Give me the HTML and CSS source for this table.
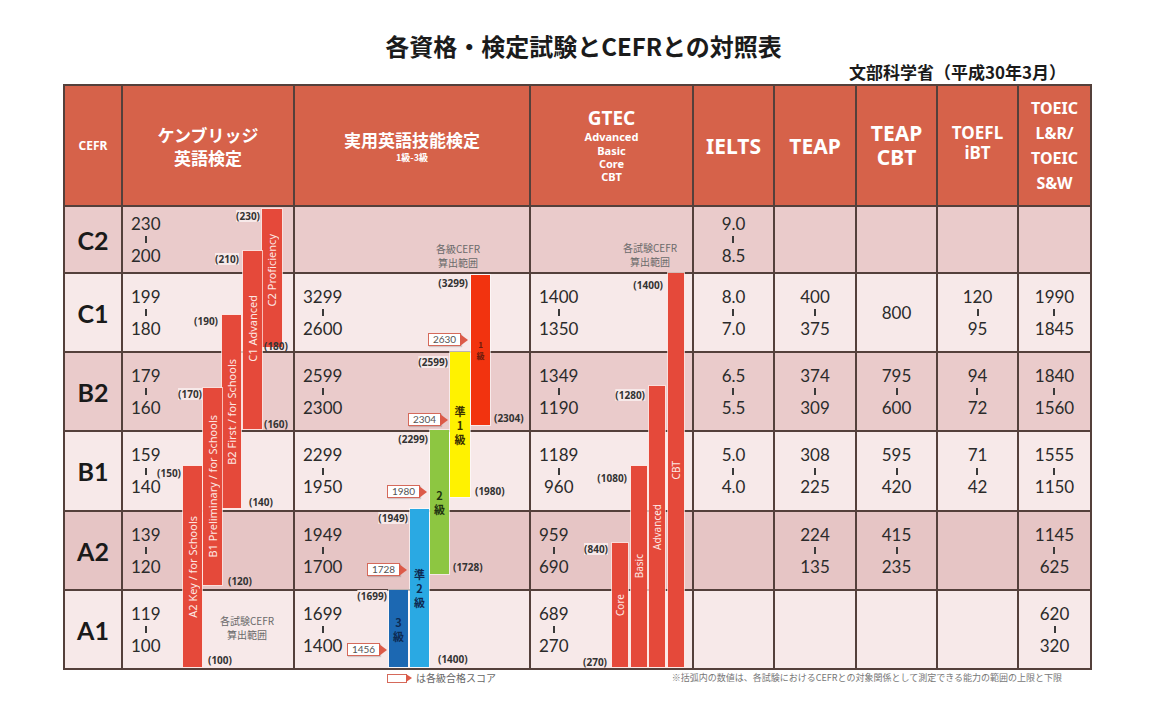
FILE: index.html
```html
<!DOCTYPE html>
<html lang="ja">
<head>
<meta charset="utf-8">
<title>各資格・検定試験とCEFRとの対照表</title>
<link rel="stylesheet" href="styles.css">
</head>
<body>
<div class="page">
  <h1 class="title">各資格・検定試験とCEFRとの対照表</h1>
  <div class="sub">文部科学省（平成30年3月）</div>

  <div class="chart">
    <!-- header -->
    <div class="h"><span class="h-cefr">CEFR</span></div>
    <div class="h"><span class="h-jp">ケンブリッジ<br>英語検定</span></div>
    <div class="h"><span class="h-jp">実用英語技能検定</span><span class="h-sm">1級-3級</span></div>
    <div class="h"><span class="h-gtec">GTEC</span><span class="h-gs">Advanced<br>Basic<br>Core<br>CBT</span></div>
    <div class="h"><span class="h-lg">IELTS</span></div>
    <div class="h"><span class="h-lg">TEAP</span></div>
    <div class="h"><span class="h-lg h-two">TEAP<br>CBT</span></div>
    <div class="h"><span class="h-md">TOEFL<br>iBT</span></div>
    <div class="h"><span class="h-toeic">TOEIC<br>L&amp;R/<br>TOEIC<br>S&amp;W</span></div>

    <!-- C2 -->
    <div class="c cf d">C2</div>
    <div class="c lc d"><span class="v">230<i class="t"></i>200</span></div>
    <div class="c lc d"></div>
    <div class="c lc d"></div>
    <div class="c cc d"><span class="v">9.0<i class="t"></i>8.5</span></div>
    <div class="c cc d"></div>
    <div class="c cc d"></div>
    <div class="c cc d"></div>
    <div class="c cc d"></div>

    <!-- C1 -->
    <div class="c cf l">C1</div>
    <div class="c lc l"><span class="v">199<i class="t"></i>180</span></div>
    <div class="c lc l"><span class="v">3299<i class="t"></i>2600</span></div>
    <div class="c lc l"><span class="v">1400<i class="t"></i>1350</span></div>
    <div class="c cc l"><span class="v">8.0<i class="t"></i>7.0</span></div>
    <div class="c cc l"><span class="v">400<i class="t"></i>375</span></div>
    <div class="c cc l"><span class="v">800</span></div>
    <div class="c cc l"><span class="v">120<i class="t"></i>95</span></div>
    <div class="c cc l"><span class="v">1990<i class="t"></i>1845</span></div>

    <!-- B2 -->
    <div class="c cf d">B2</div>
    <div class="c lc d"><span class="v">179<i class="t"></i>160</span></div>
    <div class="c lc d"><span class="v">2599<i class="t"></i>2300</span></div>
    <div class="c lc d"><span class="v">1349<i class="t"></i>1190</span></div>
    <div class="c cc d"><span class="v">6.5<i class="t"></i>5.5</span></div>
    <div class="c cc d"><span class="v">374<i class="t"></i>309</span></div>
    <div class="c cc d"><span class="v">795<i class="t"></i>600</span></div>
    <div class="c cc d"><span class="v">94<i class="t"></i>72</span></div>
    <div class="c cc d"><span class="v">1840<i class="t"></i>1560</span></div>

    <!-- B1 -->
    <div class="c cf l">B1</div>
    <div class="c lc l"><span class="v">159<i class="t"></i>140</span></div>
    <div class="c lc l"><span class="v">2299<i class="t"></i>1950</span></div>
    <div class="c lc l"><span class="v">1189<i class="t"></i>960</span></div>
    <div class="c cc l"><span class="v">5.0<i class="t"></i>4.0</span></div>
    <div class="c cc l"><span class="v">308<i class="t"></i>225</span></div>
    <div class="c cc l"><span class="v">595<i class="t"></i>420</span></div>
    <div class="c cc l"><span class="v">71<i class="t"></i>42</span></div>
    <div class="c cc l"><span class="v">1555<i class="t"></i>1150</span></div>

    <!-- A2 -->
    <div class="c cf dd">A2</div>
    <div class="c lc dd"><span class="v">139<i class="t"></i>120</span></div>
    <div class="c lc dd"><span class="v">1949<i class="t"></i>1700</span></div>
    <div class="c lc dd"><span class="v">959<i class="t"></i>690</span></div>
    <div class="c cc dd"></div>
    <div class="c cc dd"><span class="v">224<i class="t"></i>135</span></div>
    <div class="c cc dd"><span class="v">415<i class="t"></i>235</span></div>
    <div class="c cc dd"></div>
    <div class="c cc dd"><span class="v">1145<i class="t"></i>625</span></div>

    <!-- A1 -->
    <div class="c cf l">A1</div>
    <div class="c lc l"><span class="v">119<i class="t"></i>100</span></div>
    <div class="c lc l"><span class="v">1699<i class="t"></i>1400</span></div>
    <div class="c lc l"><span class="v">689<i class="t"></i>270</span></div>
    <div class="c cc l"></div>
    <div class="c cc l"></div>
    <div class="c cc l"></div>
    <div class="c cc l"></div>
    <div class="c cc l"><span class="v">620<i class="t"></i>320</span></div>

    <!-- overlay: chart bars -->
    <div class="ov">
      <!-- Cambridge -->
      <div class="bar cb b-prof"><span class="vt">C2 Proficiency</span></div>
      <div class="bar cb b-adv"><span class="vt">C1 Advanced</span></div>
      <div class="bar cb b-first"><span class="vt">B2 First / for Schools</span></div>
      <div class="bar cb b-pre"><span class="vt">B1 Preliminary / for Schools</span></div>
      <div class="bar cb b-key"><span class="vt">A2 Key / for Schools</span></div>

      <span class="lb l k230">(230)</span>
      <span class="lb l k210">(210)</span>
      <span class="lb l k190">(190)</span>
      <span class="lb l k170">(170)</span>
      <span class="lb l k150">(150)</span>
      <span class="lb r k180">(180)</span>
      <span class="lb r k160">(160)</span>
      <span class="lb r k140">(140)</span>
      <span class="lb r k120">(120)</span>
      <span class="lb r k100">(100)</span>
      <span class="rng rng-cam">各試験CEFR<br>算出範囲</span>

      <!-- Eiken -->
      <div class="bar e1"><span class="stk stk-s">1<br>級</span></div>
      <div class="bar ep1"><span class="stk">準<br>1<br>級</span></div>
      <div class="bar e2"><span class="stk">2<br>級</span></div>
      <div class="bar ep2"><span class="stk">準<br>2<br>級</span></div>
      <div class="bar e3"><span class="stk">3<br>級</span></div>

      <span class="lb l e3299">(3299)</span>
      <span class="lb l e2599">(2599)</span>
      <span class="lb l e2299">(2299)</span>
      <span class="lb l e1949">(1949)</span>
      <span class="lb l e1699">(1699)</span>
      <span class="lb r e2304">(2304)</span>
      <span class="lb r e1980">(1980)</span>
      <span class="lb r e1728">(1728)</span>
      <span class="lb r e1400">(1400)</span>

      <span class="mk m2630">2630</span>
      <span class="mk m2304">2304</span>
      <span class="mk m1980">1980</span>
      <span class="mk m1728">1728</span>
      <span class="mk m1456">1456</span>
      <span class="rng rng-eik">各級CEFR<br>算出範囲</span>

      <!-- GTEC -->
      <div class="bar gb g-cbt"><span class="vt vt-s">CBT</span></div>
      <div class="bar gb g-adv"><span class="vt vt-s">Advanced</span></div>
      <div class="bar gb g-basic"><span class="vt vt-s">Basic</span></div>
      <div class="bar gb g-core"><span class="vt vt-s">Core</span></div>

      <span class="lb l g1400">(1400)</span>
      <span class="lb l g1280">(1280)</span>
      <span class="lb l g1080">(1080)</span>
      <span class="lb l g840">(840)</span>
      <span class="lb l g270">(270)</span>
      <span class="rng rng-gtec">各試験CEFR<br>算出範囲</span>
    </div>
  </div>

  <div class="foot">
    <span class="legend"><span class="lg-mk"></span>は各級合格スコア</span>
    <span class="note">※括弧内の数値は、各試験におけるCEFRとの対象関係として測定できる能力の範囲の上限と下限</span>
  </div>
</div>
</body>
</html>
```

FILE: styles.css
```css
* { box-sizing: border-box; }

body {
  margin: 0;
  background: #ffffff;
  font-family: "Noto Sans", "Noto Sans CJK JP", sans-serif;
  color: #222;
}

.page {
  width: 1156px;
  padding: 30px 64px 0 63px;
}

.title {
  margin: 0;
  font-family: "Noto Sans CJK JP", sans-serif;
  font-size: 24px;
  line-height: 32px;
  font-weight: 700;
  text-align: center;
  padding-left: 12px;
  color: #1b1b1b;
}

.sub {
  font-family: "Noto Sans CJK JP", sans-serif;
  font-size: 17px;
  line-height: 20px;
  font-weight: 700;
  text-align: right;
  padding-right: 26px;
  color: #1b1b1b;
}

/* ---------- table grid ---------- */
.chart {
  position: relative;
  margin-top: 2px;
  display: grid;
  grid-template-columns: 56px 170px 234px 161px 79px 80px 79px 79px 71px;
  grid-template-rows: 119px 65px 77px 77px 78px 77px 77px;
  gap: 2px;
  padding: 2px;
  background: #54403b;
}

.h {
  background: #d6624a;
  color: #fff;
  font-weight: 700;
  display: flex;
  flex-direction: column;
  align-items: center;
  justify-content: center;
  text-align: center;
}

.h-cefr { font-size: 12px; line-height: 14px; }
.h-jp {
  font-family: "Noto Sans CJK JP", sans-serif;
  font-size: 17px;
  line-height: 23px;
}
.h-sm {
  font-family: "Noto Sans CJK JP", sans-serif;
  font-size: 9px;
  line-height: 12px;
  margin-top: 1px;
}
.h-gtec { font-size: 19px; line-height: 22px; }
.h-gs { font-size: 11px; line-height: 13.3px; margin-top: 1px; }
.h-lg { font-size: 21px; line-height: 24px; }
.h-md { font-size: 17px; line-height: 20px; padding-bottom: 6px; }
.h-two { padding-bottom: 2px; }
.h-toeic { font-size: 16px; line-height: 25px; }

.c {
  display: flex;
  align-items: center;
}
.d { background: #eacbcb; }
.dd { background: #e6c5c5; }
.l { background: #f7e9e9; }

.cf {
  justify-content: center;
  font-family: Lato, "Noto Sans", sans-serif;
  font-weight: 700;
  font-size: 25px;
  color: #1a1a1a;
}
.lc { padding-left: 8px; }
.cc { justify-content: center; }

.v {
  display: inline-flex;
  flex-direction: column;
  align-items: center;
  font-family: Lato, "Noto Sans", sans-serif;
  font-size: 17px;
  line-height: 16px;
  color: #2b2b2b;
}
.t {
  display: block;
  width: 2px;
  height: 7px;
  margin: 4.5px 0;
  background: #3a3a3a;
}

/* ---------- overlay chart ---------- */
.ov {
  position: absolute;
  inset: 0;
  pointer-events: none;
}

.bar {
  position: absolute;
  display: flex;
  align-items: center;
  justify-content: center;
}

.cb, .gb {
  background: #e5493a;
  box-shadow: 0 0 0 1px rgba(255, 230, 225, 0.75);
}

.vt {
  writing-mode: vertical-rl;
  transform: rotate(180deg);
  white-space: nowrap;
  color: #fde8e4;
  font-family: "Noto Sans", sans-serif;
  font-size: 11px;
  line-height: 12px;
}
.vt-s { font-size: 10px; }

/* Cambridge bars */
.b-prof  { left: 199px; top: 125px; width: 20px; height: 138px; padding-bottom: 16px; }
.b-adv   { left: 180px; top: 167px; width: 19px; height: 178px; padding-bottom: 24px; }
.b-first { left: 159px; top: 231px; width: 19px; height: 193px; }
.b-pre   { left: 140px; top: 304px; width: 19px; height: 197px; }
.b-key   { left: 120px; top: 382px; width: 19px; height: 201px; }

/* score labels */
.lb {
  position: absolute;
  font-family: "Noto Sans", sans-serif;
  font-size: 10px;
  font-weight: 700;
  line-height: 12px;
  color: #333;
  white-space: nowrap;
}
.lb.l { transform: translate(-100%, -50%); }
.lb.r { transform: translateY(-50%); }

.k230 { left: 197px; top: 132px; }
.k210 { left: 176px; top: 175px; }
.k190 { left: 155px; top: 237px; }
.k170 { left: 139px; top: 310px; }
.k150 { left: 118px; top: 389px; }
.k180 { left: 201px; top: 262px; }
.k160 { left: 201px; top: 340px; }
.k140 { left: 186px; top: 418px; }
.k120 { left: 165px; top: 497px; }
.k100 { left: 145px; top: 576px; }

.rng {
  position: absolute;
  transform: translate(-50%, -50%);
  font-family: "Noto Sans CJK JP", sans-serif;
  font-size: 10px;
  line-height: 14px;
  color: #6a6a6a;
  text-align: center;
  white-space: nowrap;
}
.rng-cam  { left: 184px; top: 544px; }
.rng-eik  { left: 395px; top: 172px; }
.rng-gtec { left: 587px; top: 171px; }

/* Eiken bars */
.e1  { left: 408px; top: 191px; width: 19px; height: 150px; background: #f2330f; }
.ep1 { left: 387px; top: 268px; width: 20px; height: 145px; background: #fff200; }
.e2  { left: 367px; top: 346px; width: 19px; height: 144px; background: #8dc641; }
.ep2 { left: 347px; top: 425px; width: 19px; height: 158px; background: #2aa9e3; }
.e3  { left: 326px; top: 506px; width: 19px; height: 77px;  background: #1c68b2; }

.e1, .ep1, .e2, .ep2, .e3 { box-shadow: 0 0 0 1px rgba(255, 255, 255, 0.6); }

.stk {
  font-family: "Noto Sans CJK JP", sans-serif;
  font-weight: 700;
  font-size: 11px;
  line-height: 14px;
  text-align: center;
  color: #1d2630;
}
.stk-s { font-size: 8px; line-height: 11px; color: #6b1a0c; }
.ep1 .stk { color: #3a3000; }
.e2 .stk { color: #1e3310; }
.ep2 .stk, .e3 .stk { color: #0d2a52; }

.e3299 { left: 405px; top: 199px; }
.e2599 { left: 385px; top: 278px; }
.e2299 { left: 365px; top: 355px; }
.e1949 { left: 345px; top: 434px; }
.e1699 { left: 324px; top: 512px; }
.e2304 { left: 431px; top: 334px; }
.e1980 { left: 412px; top: 407px; }
.e1728 { left: 390px; top: 483px; }
.e1400 { left: 375px; top: 575px; }

/* passing-score markers */
.mk {
  position: absolute;
  width: 33px;
  height: 13px;
  background: #fff;
  border: 1px solid #d5695a;
  font-family: Lato, "Noto Sans", sans-serif;
  font-size: 10px;
  line-height: 11px;
  color: #555;
  text-align: center;
  box-shadow: 1px 1px 1px rgba(0, 0, 0, 0.15);
}
.mk::after {
  content: "";
  position: absolute;
  left: 100%;
  top: 50%;
  transform: translateY(-50%);
  border-left: 8px solid #dc5a48;
  border-top: 6px solid transparent;
  border-bottom: 6px solid transparent;
}
.m2630 { left: 365px; top: 249px; }
.m2304 { left: 345px; top: 329px; }
.m1980 { left: 324px; top: 401px; }
.m1728 { left: 304px; top: 479px; }
.m1456 { left: 284px; top: 559px; }

/* GTEC bars */
.g-cbt   { left: 605px; top: 189px; width: 16px; height: 394px; }
.g-adv   { left: 586px; top: 302px; width: 16px; height: 281px; }
.g-basic { left: 568px; top: 382px; width: 16px; height: 201px; }
.g-core  { left: 549px; top: 459px; width: 16px; height: 124px; }

.g1400 { left: 600px; top: 201px; }
.g1280 { left: 582px; top: 311px; }
.g1080 { left: 564px; top: 394px; }
.g840  { left: 545px; top: 465px; }
.g270  { left: 544px; top: 578px; }

/* ---------- footer ---------- */
.foot {
  display: flex;
  align-items: center;
  height: 16px;
  padding-left: 324px;
}
.legend {
  display: flex;
  align-items: center;
  font-family: "Noto Sans CJK JP", sans-serif;
  font-size: 10px;
  line-height: 12px;
  color: #666;
}
.lg-mk {
  position: relative;
  width: 20px;
  height: 9px;
  margin-right: 9px;
  background: #fff;
  border: 1px solid #d5695a;
}
.lg-mk::after {
  content: "";
  position: absolute;
  left: 100%;
  top: 50%;
  transform: translateY(-50%);
  border-left: 6px solid #dc5a48;
  border-top: 4.5px solid transparent;
  border-bottom: 4.5px solid transparent;
}
.note {
  margin-left: auto;
  margin-right: 30px;
  font-family: "Noto Sans CJK JP", sans-serif;
  font-size: 9px;
  line-height: 12px;
  color: #777;
  white-space: nowrap;
}
```
